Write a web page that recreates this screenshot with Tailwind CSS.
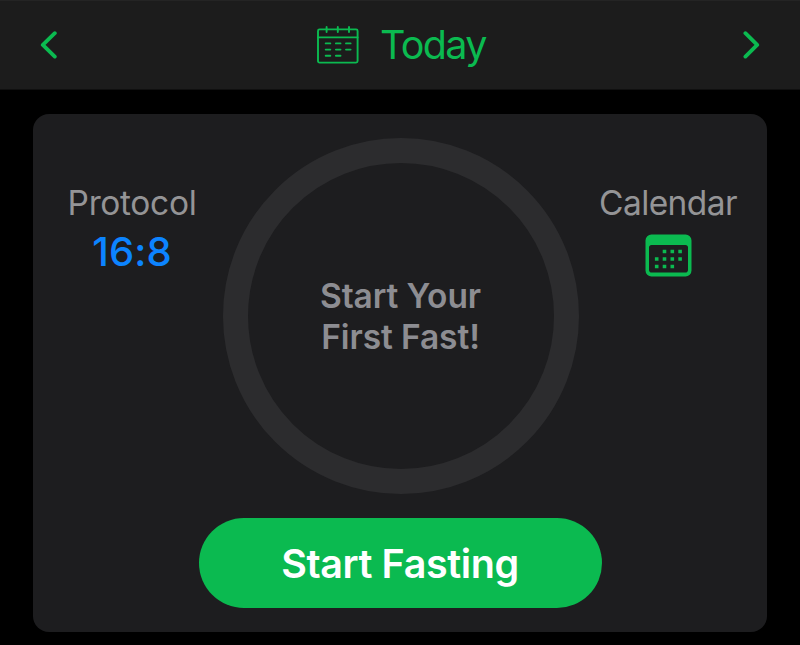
<!DOCTYPE html>
<html lang="en">
<head>
<meta charset="utf-8">
<meta name="viewport" content="width=device-width, initial-scale=1">
<title>Fasting – Today</title>
<script src="https://cdn.jsdelivr.net/npm/@tailwindcss/browser@4"></script>
</head>
<body class="bg-black w-[800px] h-[645px] overflow-hidden font-[Inter,Roboto,sans-serif]">
<header class="h-[90px] bg-[#1c1c1c] border-t border-b border-t-[#242424] border-b-[#101010] flex items-center justify-between px-10 text-[#0bba50]">
  <button aria-label="Previous day" class="w-5 h-7">
    <svg class="block" width="20" height="28" viewBox="0 0 20 28" fill="none" stroke="currentColor" stroke-width="3.8" stroke-linecap="round" stroke-linejoin="round"><path d="M14.800 2.200 2.800 13.900l12 11.700"/></svg>
  </button>
  <div class="flex items-center pl-[2px]">
    <svg class="block" width="42" height="38" viewBox="0 0 42 38" fill="none" stroke="currentColor" stroke-width="1.9" stroke-linecap="round"><rect x="1" y="3.4" width="39.6" height="33.2" rx="1.5"/><path d="M1 11.4h39.6M9.6 1v5M20.8 1v5M32 1v5"/><path d="M8.7 17.4h4.6M18.9 17.4h4.6M29 17.4h4.6M8.7 23.6h4.6M18.9 23.6h4.6M29 23.6h4.6M8.7 29.7h4.6M18.9 29.7h4.6"/></svg>
    <h1 class="ml-[21px] w-[105px] text-[39.5px] leading-[48px] font-normal tracking-[-1.65px] whitespace-nowrap">Today</h1>
  </div>
  <button aria-label="Next day" class="w-5 h-7">
    <svg class="block" width="20" height="28" viewBox="0 0 20 28" fill="none" stroke="currentColor" stroke-width="3.8" stroke-linecap="round" stroke-linejoin="round"><path d="M5.400 2.200 17.200 13.900 5.400 25.600"/></svg>
  </button>
</header>
<main class="px-[33px] pt-6">
  <section class="h-[518px] rounded-[16px] bg-[#1d1d1f] pt-6 flex flex-col items-center">
    <div class="w-full grid grid-cols-[189.5px_356px_188.5px]">
      <div class="w-[198px] pt-[44px] flex flex-col items-center text-center">
        <span class="text-[33.5px] leading-[42px] tracking-[-0.35px] text-[#949496]">Protocol</span>
        <span class="mt-[4px] text-[40px] leading-[48px] font-medium tracking-[0.15px] text-[#0c84ff]">16:8</span>
      </div>
      <div class="size-[356px] rounded-full border-[25px] border-[#2c2c2e] flex items-center justify-center">
        <p class="pt-[2px] text-center text-[33.5px] leading-[41px] font-semibold tracking-[-0.1px] text-[#8d8d92] whitespace-nowrap">Start Your<br>First Fast!</p>
      </div>
      <div class="w-[179px] pt-[44px] flex flex-col items-center">
        <span class="text-[33.5px] leading-[42px] tracking-[-0.6px] text-[#949496]">Calendar</span>
        <svg class="block mt-[10px]" width="47" height="43" viewBox="0 0 47 43" fill="#0bba50"><path fill-rule="evenodd" d="M6.500.500h34a6 6 0 0 1 6 6v30a6 6 0 0 1-6 6h-34a6 6 0 0 1-6-6v-30a6 6 0 0 1 6-6ZM6.600 11a2.600 2.600 0 0 0-2.600 2.600v22.200a2.800 2.800 0 0 0 2.800 2.800h33.400a2.800 2.800 0 0 0 2.800-2.800V13.600a2.600 2.600 0 0 0-2.600-2.600Z"/><path d="M17.700 15.700h3.600v3.600h-3.600zM25.500 15.700h3.600v3.600h-3.600zM33.300 15.700h3.600v3.600h-3.600zM9.900 23.200h3.600v3.600h-3.600zM17.700 23.200h3.600v3.600h-3.600zM25.500 23.200h3.600v3.600h-3.600zM33.300 23.200h3.600v3.600h-3.600zM9.900 30.700h3.600v3.600h-3.600zM17.700 30.700h3.600v3.600h-3.600zM25.500 30.700h3.600v3.600h-3.600z"/></svg>
      </div>
    </div>
    <button class="mt-6 pt-[2px] w-[403px] h-[89.5px] rounded-full bg-[#0bba50] text-white text-[39.5px] leading-[48px] font-semibold tracking-[-0.4px] whitespace-nowrap">Start Fasting</button>
  </section>
</main>
</body>
</html>
